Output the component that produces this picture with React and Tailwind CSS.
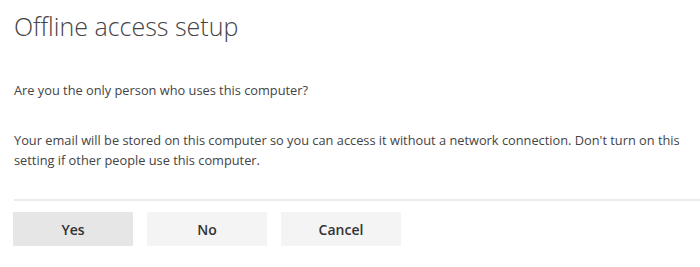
import React from "react";

const Button = ({ children, primary }) => (
    <button
        className={
            primary
                ? "w-[120px] h-[34px] bg-[#e6e6e6] text-[14px] font-semibold text-[#333]"
                : "w-[120px] h-[34px] bg-[#f4f4f4] text-[14px] font-semibold text-[#333]"
        }
    >
        {children}
    </button>
);

export default function App() {
    return (
        <div
            className="w-[700px] h-[267px] bg-white text-[#444] pl-[14px] overflow-hidden"
            style={{ fontFamily: '"Open Sans", "Noto Sans", sans-serif' }}
        >
            <h1 className="text-[25px] font-light leading-[32px] pt-[10px] text-[#444]">
                Offline access setup
            </h1>
            <p className="text-[12.8px] leading-[20px] mt-[38px]">
                Are you the only person who uses this computer?
            </p>
            <p className="text-[12.8px] leading-[20px] mt-[30px] pr-[10px]">
                Your email will be stored on this computer so you can access it without a network connection. Don't turn on this setting if other people use this computer.
            </p>
            <div className="h-[2px] bg-[#ebebeb] mt-[29px]" />
            <div className="flex gap-[14px] mt-[11px] -ml-[1px]">
                <Button primary>Yes</Button>
                <Button>No</Button>
                <Button>Cancel</Button>
            </div>
        </div>
    );
}
